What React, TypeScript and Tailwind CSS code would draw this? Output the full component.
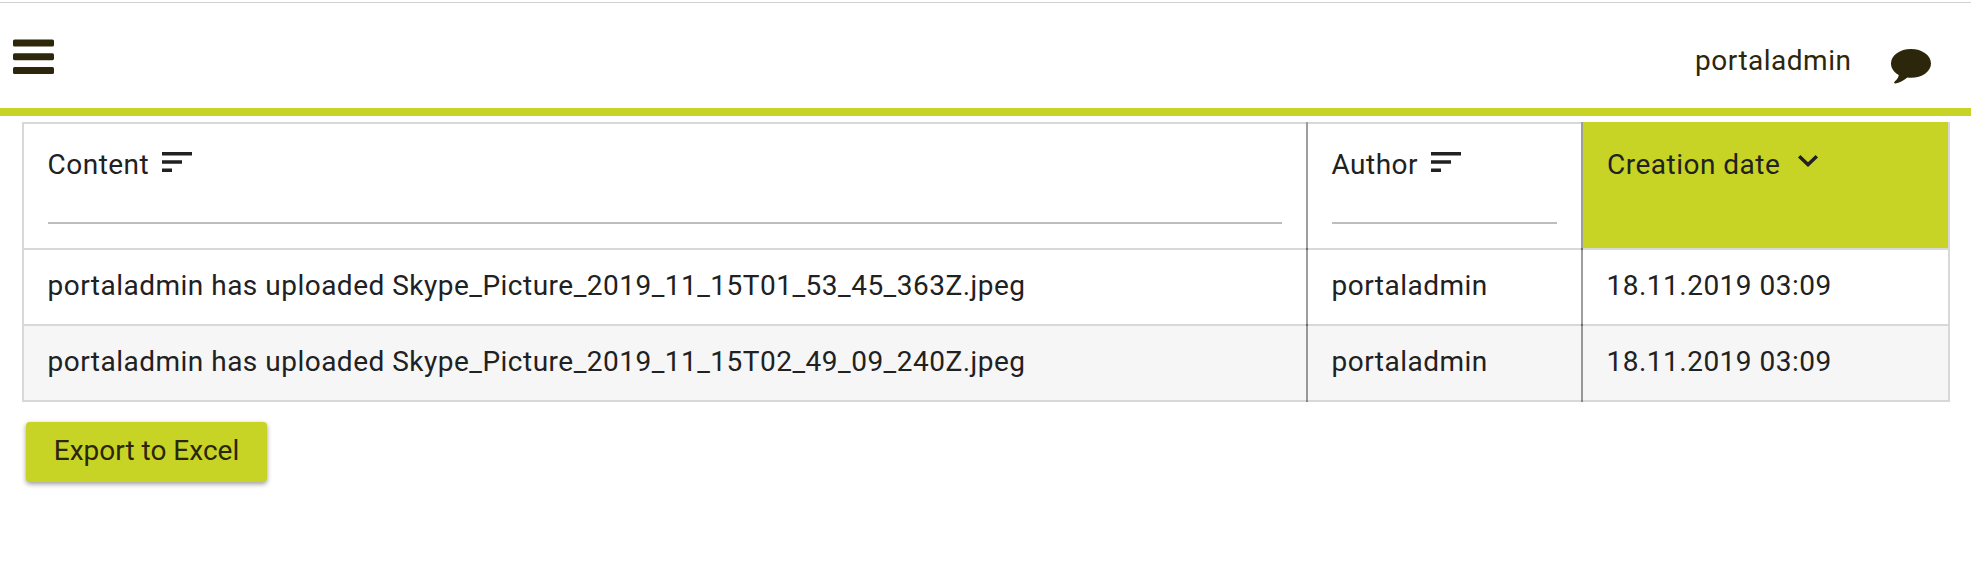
import React from "react";

const rows = [
  { content: "portaladmin has uploaded Skype_Picture_2019_11_15T01_53_45_363Z.jpeg", author: "portaladmin", date: "18.11.2019 03:09" },
  { content: "portaladmin has uploaded Skype_Picture_2019_11_15T02_49_09_240Z.jpeg", author: "portaladmin", date: "18.11.2019 03:09" },
];

function SortIcon() {
  return (
    <svg width="30" height="20" viewBox="0 0 30 20" fill="#212121" className="mt-[28px] shrink-0">
      <path d="M0 0h30v3.4H0zM0 8.3h20v3.4H0zM0 16.6h10V20H0z" />
    </svg>
  );
}

function Divider({ last = false }: { last?: boolean }) {
  return (
    <div
      className={
        last
          ? "w-[2px] shrink-0 border-b-2 border-[#868686] bg-[#989898]"
          : "w-[2px] shrink-0 border-b-2 border-[#6b6b6b] bg-[#9e9e9e]"
      }
    />
  );
}

function FilterHeader({ label, className, labelClassName }: { label: string; className: string; labelClassName: string }) {
  return (
    <div className={"flex flex-col border-y-2 border-[#d8d8d8] px-6 " + className}>
      <div className="-ml-[0.5px] flex h-[98px] gap-[12px]">
        <span className={"shrink-0 pt-[25px] leading-[32px] whitespace-nowrap " + labelClassName}>{label}</span>
        <SortIcon />
      </div>
      <div className="h-[2px] bg-[#bdbdbd]" />
    </div>
  );
}

export default function App() {
  return (
    <div className="h-[576px] w-full overflow-hidden bg-white font-['Roboto',sans-serif] text-[28px] tracking-[0.49px] text-[#212121]">
      <header className="flex h-[116px] justify-between border-b-8 border-[#c7d426] text-[#2c260b]">
        <div className="mt-[2px] flex w-full justify-between self-start border-t border-[#d0d0d0]">
          <svg width="41" height="36" viewBox="0 0 41 36" fill="currentColor" className="mt-[36px] ml-[13px]">
            <rect y="0.5" width="41" height="7" rx="1.6" />
            <rect y="14.2" width="41" height="7" rx="1.6" />
            <rect y="28" width="41" height="7" rx="1.6" />
          </svg>
          <div className="mr-[40px] flex">
            <span className="mt-[42px] leading-[32px]">portaladmin</span>
            <svg width="40" height="35" viewBox="0 0 40 35" fill="currentColor" className="mt-[46px] ml-[39.6px]">
              <path d="M20 0C31 0 40 6.4 40 14.4S31 28.8 20 28.8c-1.2 0-2.4-.1-3.6-.3C12.2 32 8.4 33.9 4.5 34.4 3.8 34.5 3.2 34.2 3.1 33.7 3 33.2 3.4 32.8 4 32.2 5.7 30.6 7.1 29.3 7.8 25.9 3 23.3 0 19.1 0 14.4 0 6.4 9 0 20 0z" />
            </svg>
          </div>
        </div>
      </header>
      <main className="pt-[6px] pr-[21px] pl-[22px]">
        <div className="border-x-2 border-[#d8d8d8]">
          <div className="flex h-[128px]">
            <FilterHeader label="Content" className="w-[1282px]" labelClassName="w-[102.5px]" />
            <Divider />
            <FilterHeader label="Author" className="w-[273px]" labelClassName="w-[87.5px]" />
            <Divider />
            <div className="flex flex-1 border-b-2 border-[#d8d8d8] bg-[#c7d426] pt-[2px] pl-6">
              <span className="w-[172px] shrink-0 pt-[25px] leading-[32px] whitespace-nowrap">Creation date</span>
              <svg width="20" height="12" viewBox="0 0 20 12" fill="#212121" className="mt-[31px] ml-[19px]">
                <path d="M2.4 0L10 7.2 17.6 0 20 2.4 10 12 0 2.4z" />
              </svg>
            </div>
          </div>
          {rows.map((row, i) => (
            <div key={i} className={i % 2 ? "flex h-[76px] bg-[#f6f6f6] leading-[32px]" : "flex h-[76px] bg-white leading-[32px]"}>
              <div className="w-[1282px] border-b-2 border-[#d8d8d8] pt-[20px] pl-[23.5px]">{row.content}</div>
              <Divider last={i === rows.length - 1} />
              <div className="w-[273px] border-b-2 border-[#d8d8d8] pt-[20px] pl-[23.5px]">{row.author}</div>
              <Divider last={i === rows.length - 1} />
              <div className="flex-1 border-b-2 border-[#d8d8d8] pt-[20px] pl-[23.5px]">{row.date}</div>
            </div>
          ))}
        </div>
        <button className="mt-[20px] ml-[4px] flex h-[60px] w-[241px] items-center justify-center rounded-[4px] bg-[#c7d426] pb-[2px] tracking-[0px] text-[#2c260b] shadow-[0_2px_5px_rgba(0,0,0,0.4)]">
          Export to Excel
        </button>
      </main>
    </div>
  );
}
